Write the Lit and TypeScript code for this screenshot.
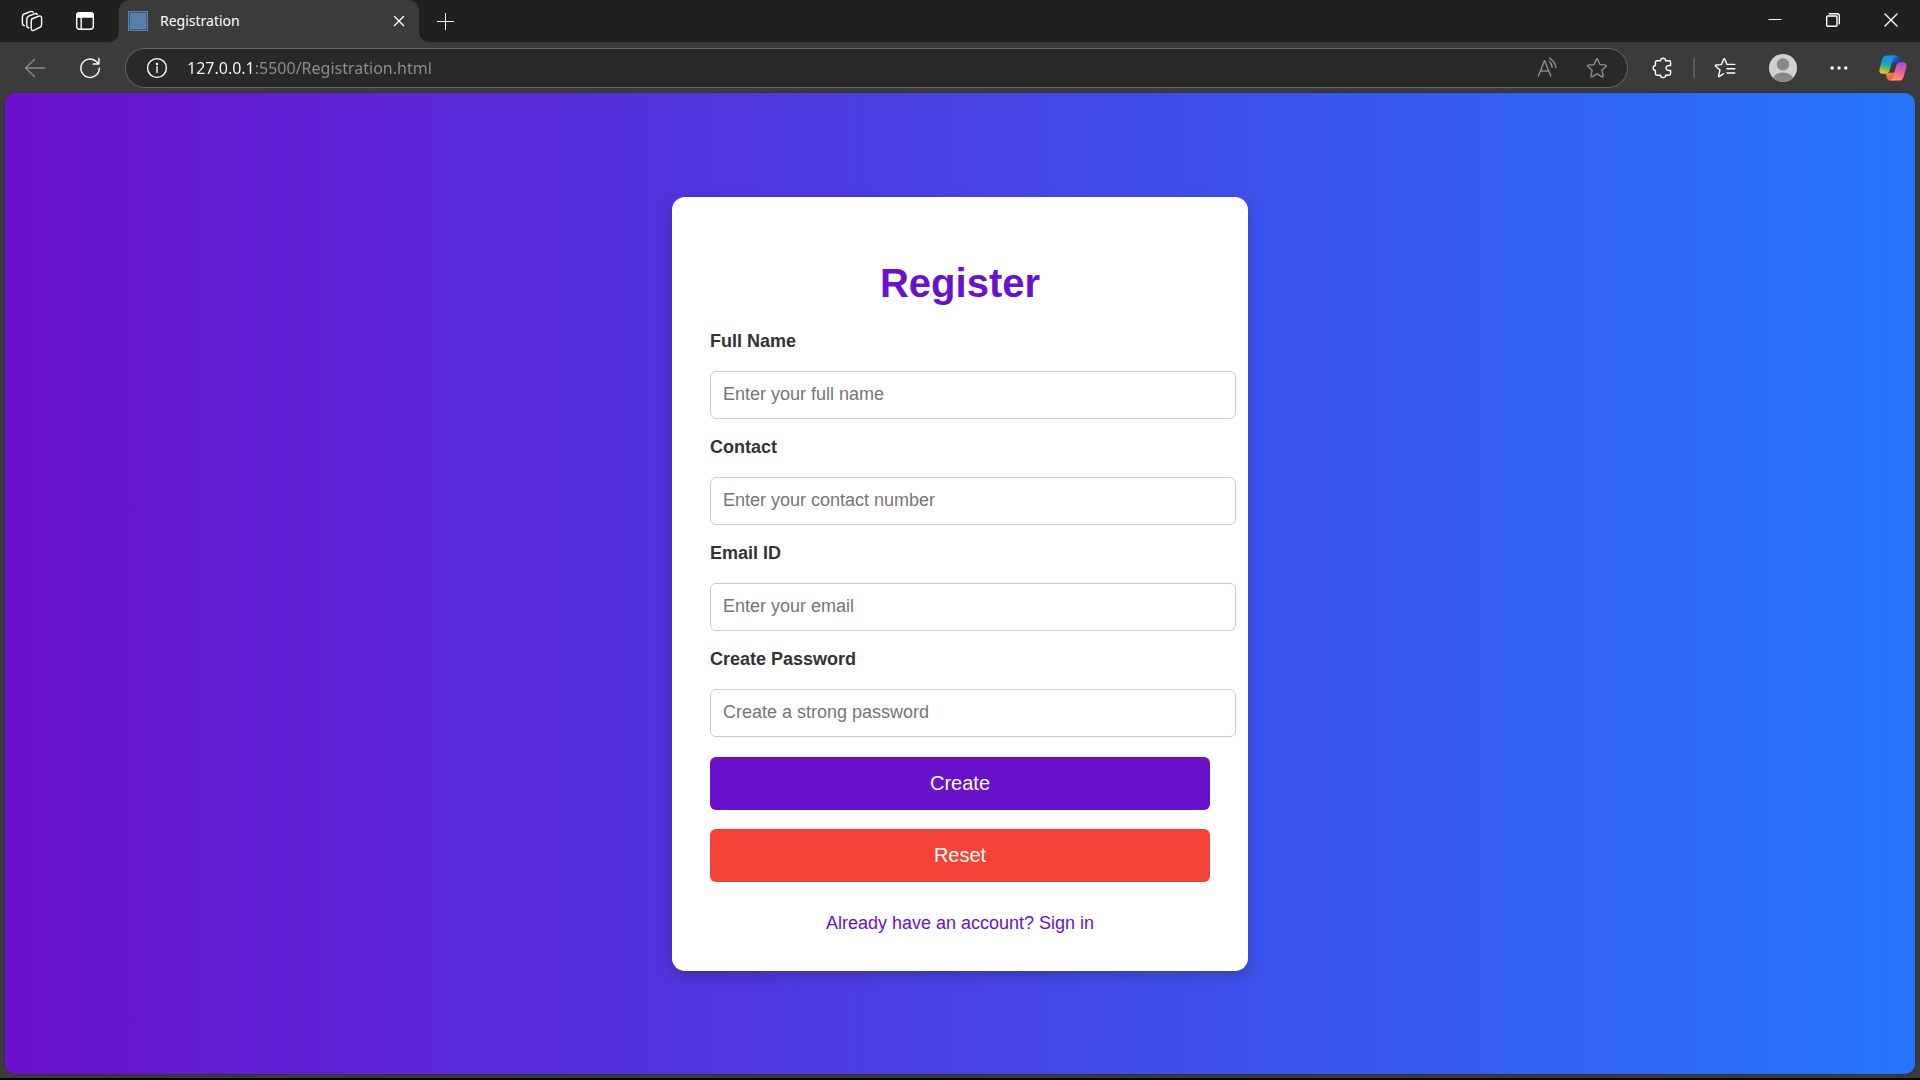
import { LitElement, html, css, svg } from "lit";
import { customElement } from "lit/decorators.js";

interface Field {
  id: string;
  label: string;
  type: string;
  placeholder: string;
}

const FIELDS: Field[] = [
  { id: "full-name", label: "Full Name", type: "text", placeholder: "Enter your full name" },
  { id: "contact", label: "Contact", type: "tel", placeholder: "Enter your contact number" },
  { id: "email", label: "Email ID", type: "email", placeholder: "Enter your email" },
  { id: "password", label: "Create Password", type: "password", placeholder: "Create a strong password" },
];

const icon = (size: number, body: unknown) =>
  html`<svg class="icon" width=${size} height=${size} viewBox="0 0 ${size} ${size}" aria-hidden="true">${body}</svg>`;

const workspaces = svg`
  <path d="M10.6 9 L17.8 6.2 Q20.6 5.4 20.6 8.2 V14.4 Q20.6 16.4 18.8 17.4 L13.2 20.2 Q10.3 21.2 10.2 18.6 V11.4 Q10.2 9.6 11.4 8.8"/>
  <path d="M7.8 17.8 Q5.8 17.6 5.8 15.4 V9.2 Q5.8 7.2 7.6 6.2 L13.4 3.8 Q15.6 3 16.4 4.4"/>
  <path d="M3.4 15.6 Q1.4 15.4 1.4 12.8 V6.8 Q1.4 4.8 3.2 4 L9.2 1.6 Q11.4 1 12.2 2.2"/>`;

const tabActions = svg`
  <rect x="2.7" y="2.7" width="16.6" height="16.6" rx="3"/>
  <path class="solid" d="M2.7 7 V5.5 a2.8 2.8 0 0 1 2.8-2.8 h11 a2.8 2.8 0 0 1 2.8 2.8 V7 Z"/>
  <path d="M7.2 7.5 V19"/>`;

const back = svg`<path d="M20.5 11 H1.5 M10.5 2.5 L1.5 11 L10.5 19.5"/>`;
const reload = svg`<path d="M20.3 11.2 A9.2 9.2 0 1 1 17.6 4.7 L19.8 7 M19.9 1.4 V7 H14.2"/>`;
const info = svg`
  <circle cx="11" cy="11" r="9.4"/>
  <path d="M11 9.8 V15.6"/><circle class="solid" cx="11" cy="7" r="0.6"/>`;
const readAloud = svg`
  <path d="M1.4 19 L7.6 3.6 L13.8 19 M3.6 14 H11.6"/>
  <path d="M12.4 4.2 Q14.8 6.8 15.2 10.4 M12.6 1.2 Q18 4.4 19 10.6"/>`;
const star = svg`<path d="M11 1.8 Q11.4 1.8 11.7 2.5 L13.9 7.5 L19.6 8.1 Q21 8.4 20.1 9.4 L15.9 13.3 L17.1 18.8 Q17.2 20.2 16 19.8 L11 16.9 L6 19.8 Q4.8 20.2 4.9 18.8 L6.1 13.3 L1.9 9.4 Q1 8.4 2.4 8.1 L8.1 7.5 L10.3 2.5 Q10.6 1.8 11 1.8 Z"/>`;
const puzzle = svg`<path d="M5 3.8 H8.6 Q8.4 1.3 11.1 1.3 Q13.8 1.3 13.6 3.8 H17 Q18.6 3.8 18.6 5.4 V8.6 Q14.2 8 14 11 Q14.2 14 18.6 13.4 V16.6 Q18.6 18.2 17 18.2 H13.6 Q13.8 20.6 11.1 20.6 Q8.4 20.6 8.6 18.2 H5 Q3.4 18.2 3.4 16.6 V13.4 Q1.2 13.4 1.2 11 Q1.2 8.6 3.4 8.6 V5.4 Q3.4 3.8 5 3.8 Z"/>`;
const favorites = svg`
  <path d="M9.4 16.7 L5.6 19.4 Q4.4 20 4.6 18.6 L6 13 L1.6 9.2 Q0.8 8.2 2.2 8 L7.4 7.6 L9.6 2.4 Q10.3 1.2 10.9 2.4 L13 7.4 H20.8"/>
  <path d="M13 11.7 H20.8 M13 16 H20.8"/>`;
const dots = svg`
  <circle class="solid" cx="4.2" cy="11" r="1"/>
  <circle class="solid" cx="11" cy="11" r="1"/>
  <circle class="solid" cx="17.8" cy="11" r="1"/>`;

const avatar = svg`
  <defs><clipPath id="avatar-clip"><circle cx="14" cy="14" r="14"/></clipPath></defs>
  <g class="flat" clip-path="url(#avatar-clip)">
    <rect width="28" height="28" fill="#d2d0ce"/>
    <circle cx="14" cy="10.4" r="6.2" fill="#8a8886"/>
    <ellipse cx="14" cy="26.4" rx="10.6" ry="8" fill="#8a8886"/>
  </g>`;

const copilot = svg`
  <defs>
    <linearGradient id="cp-left" x1="0.6" y1="0" x2="0.35" y2="1">
      <stop offset="0" stop-color="#1a8fe6"/><stop offset="0.4" stop-color="#169fce"/>
      <stop offset="0.7" stop-color="#5fba62"/><stop offset="1" stop-color="#f4cd10"/>
    </linearGradient>
    <linearGradient id="cp-right" x1="0.7" y1="0" x2="0.4" y2="1">
      <stop offset="0" stop-color="#a04fe8"/><stop offset="0.5" stop-color="#ee5a9c"/>
      <stop offset="1" stop-color="#ff9a5e"/>
    </linearGradient>
    <linearGradient id="cp-top" x1="0" y1="0" x2="1" y2="0.6">
      <stop offset="0" stop-color="#1c7de6"/><stop offset="1" stop-color="#173fc0"/>
    </linearGradient>
    <linearGradient id="cp-bottom" x1="0" y1="0" x2="1" y2="1">
      <stop offset="0" stop-color="#f7902a"/><stop offset="1" stop-color="#ec4a50"/>
    </linearGradient>
  </defs>
  <g class="flat">
    <path fill="url(#cp-top)" d="M12 2.4 H17.6 Q20.4 2.4 21.2 5.2 L22.4 9.2 L19 9.8 H13 Z"/>
    <path fill="url(#cp-bottom)" d="M7.6 20.4 L11 19.8 H17 L17 27.6 H12.4 Q9.6 27.6 8.8 24.8 Z"/>
    <path fill="url(#cp-left)" d="M9 2.4 H17.6 Q15.8 3.2 15 6 L11.6 17.6 Q10.8 20.6 7.6 20.8 H4.8 Q0.4 20.6 1.6 16 L4.2 6.6 Q5.4 2.4 9 2.4 Z"/>
    <path fill="url(#cp-right)" d="M21 27.6 H12.4 Q14.2 26.8 15 24 L18.4 12.4 Q19.2 9.4 22.4 9.2 H25.2 Q29.6 9.4 28.4 14 L25.8 23.4 Q24.6 27.6 21 27.6 Z"/>
  </g>`;

const minimize = svg`<path class="crisp" d="M0.5 6.5 H13.5"/>`;
const restore = svg`
  <rect x="0.7" y="3" width="10.3" height="10.3" rx="1"/>
  <path d="M3.2 0.7 H11 Q13.3 0.7 13.3 3 V10.8"/>`;
const cross = svg`<path d="M1 1 L13 13 M13 1 L1 13"/>`;
const smallCross = svg`<path d="M1.5 1.5 L10.5 10.5 M10.5 1.5 L1.5 10.5"/>`;
const plus = svg`<path class="crisp" d="M9.5 1 V18 M1 9.5 H18"/>`;

@customElement("browser-chrome")
export class BrowserChrome extends LitElement {
  static styles = css`
    :host {
      display: block;
      color: #ffffff;
      font-family: "Noto Sans", "Open Sans", sans-serif;
    }
    .strip {
      display: flex;
      height: 42px;
    }
    .strip-start,
    .strip-end {
      display: flex;
      align-items: center;
      background: #202020;
    }
    .strip-start {
      gap: 13px;
      padding: 0 14px 0 12px;
      border-bottom-right-radius: 10px;
    }
    .strip-end {
      flex: 1;
      justify-content: space-between;
      border-bottom-left-radius: 10px;
    }
    .tab-slot {
      display: flex;
      width: 300px;
      background: linear-gradient(#202020 50%, #3b3b3b 50%);
    }
    .tab {
      display: flex;
      flex: 1;
      align-items: center;
      gap: 12px;
      padding: 0 10px 0 9px;
      border-radius: 10px 10px 0 0;
      background: #3b3b3b;
    }
    .favicon {
      box-sizing: border-box;
      width: 20px;
      height: 20px;
      border: 1px solid #5b84b4;
      background: #597ea9;
      box-shadow: inset 0 0 0 1px #3f5673, inset 0 0 0 2px #5b84b4;
    }
    .title {
      flex: 1;
      font-size: 14px;
      line-height: 20px;
    }
    .window {
      display: flex;
      height: 100%;
    }
    button {
      display: flex;
      align-items: center;
      justify-content: center;
      width: 40px;
      height: 40px;
      padding: 0;
      border: 0;
      background: none;
      color: inherit;
      font: inherit;
    }
    .close-tab {
      width: 20px;
      height: 20px;
    }
    .new-tab {
      width: 53px;
    }
    .window button {
      width: 58px;
    }
    .copilot {
      width: 36px;
    }
    .dim {
      color: #8c8c8c;
    }
    .toolbar {
      display: flex;
      align-items: center;
      gap: 15px;
      padding: 6px 9px 5px 15px;
    }
    .address {
      box-sizing: border-box;
      display: flex;
      flex: 1;
      align-items: center;
      height: 40px;
      padding: 0 6px 0 11px;
      border: 1px solid #666666;
      border-radius: 20px;
      background: #292929;
    }
    .address button {
      height: 38px;
    }
    .address .dim {
      width: 49px;
    }
    .url {
      flex: 1;
      min-width: 0;
      padding: 0 0 0 10px;
      border: 0;
      outline: 0;
      background: linear-gradient(to right, #ffffff 77px, #8f8f8f 77px);
      background-clip: text;
      -webkit-background-clip: text;
      color: transparent;
      font: 16px/24px "Noto Sans", "Open Sans", sans-serif;
    }
    .tools,
    .account {
      display: flex;
      align-items: center;
    }
    .tools {
      padding-right: 3px;
    }
    .account {
      gap: 16px;
    }
    .divider {
      width: 2px;
      height: 20px;
      margin: 0 10px;
      background: #5c5c5c;
    }
    .icon {
      display: block;
      fill: none;
      stroke: currentColor;
      stroke-width: 1.4;
      stroke-linecap: round;
      stroke-linejoin: round;
    }
    .solid {
      fill: currentColor;
    }
    .crisp {
      stroke-width: 1;
      stroke-linecap: butt;
    }
    .flat {
      stroke: none;
    }
  `;

  render() {
    return html`
      <div class="strip">
        <div class="strip-start">
          <button aria-label="Workspaces">${icon(22, workspaces)}</button>
          <button aria-label="Tab actions">${icon(22, tabActions)}</button>
        </div>
        <div class="tab-slot">
          <div class="tab">
            <span class="favicon"></span>
            <span class="title">Registration</span>
            <button class="close-tab" aria-label="Close tab">${icon(12, smallCross)}</button>
          </div>
        </div>
        <div class="strip-end">
          <button class="new-tab" aria-label="New tab">${icon(19, plus)}</button>
          <div class="window">
            <button aria-label="Minimize">${icon(14, minimize)}</button>
            <button aria-label="Restore">${icon(14, restore)}</button>
            <button aria-label="Close">${icon(14, cross)}</button>
          </div>
        </div>
      </div>
      <div class="toolbar">
        <button class="dim" aria-label="Back">${icon(22, back)}</button>
        <button aria-label="Refresh">${icon(22, reload)}</button>
        <div class="address">
          <button aria-label="Site information">${icon(22, info)}</button>
          <input class="url" type="text" aria-label="Address" spellcheck="false" value="127.0.0.1:5500/Registration.html" />
          <button class="dim" aria-label="Read aloud">${icon(22, readAloud)}</button>
          <button class="dim" aria-label="Add to favorites">${icon(22, star)}</button>
        </div>
        <div class="tools">
          <button aria-label="Extensions">${icon(22, puzzle)}</button>
          <span class="divider"></span>
          <button aria-label="Favorites">${icon(22, favorites)}</button>
        </div>
        <div class="account">
          <button aria-label="Profile">${icon(28, avatar)}</button>
          <button aria-label="Settings and more">${icon(22, dots)}</button>
          <button class="copilot" aria-label="Copilot">${icon(30, copilot)}</button>
        </div>
      </div>
    `;
  }
}

@customElement("register-card")
export class RegisterCard extends LitElement {
  static styles = css`
    :host {
      display: block;
      width: 500px;
      padding: 38px;
      border-radius: 13px;
      background: #ffffff;
      box-shadow: 0 5px 13px rgba(0, 0, 0, 0.2);
      font: 18px/20px "Liberation Sans", Arial, sans-serif;
    }
    h1 {
      margin: 25px 0;
      color: #6a11cb;
      font-size: 40px;
      line-height: 46px;
      text-align: center;
    }
    form {
      display: flex;
      flex-direction: column;
      gap: 18px;
    }
    .field {
      display: flex;
      flex-direction: column;
      gap: 20px;
    }
    label {
      color: #333333;
      font-weight: bold;
    }
    input {
      width: 100%;
      height: 46px;
      padding: 0 12px;
      border: 1px solid #cccccc;
      border-radius: 6px;
      background: #ffffff;
      font: inherit;
    }
    input::placeholder {
      color: #757575;
    }
    .actions {
      display: grid;
      gap: 19px;
      padding-top: 2px;
    }
    button {
      height: 53px;
      border: 0;
      border-radius: 6px;
      color: #ffffff;
      font: 20px/24px "Liberation Sans", Arial, sans-serif;
    }
    .create {
      background: #6a11cb;
    }
    .reset {
      background: #f44336;
    }
    .sign-in {
      margin: 31px 0 0;
      text-align: center;
    }
    a {
      color: #6a11cb;
      text-decoration: none;
    }
  `;

  render() {
    return html`
      <h1>Register</h1>
      <form>
        ${FIELDS.map(
          (f) => html`
            <div class="field">
              <label for=${f.id}>${f.label}</label>
              <input id=${f.id} type=${f.type} placeholder=${f.placeholder} />
            </div>
          `,
        )}
        <div class="actions">
          <button class="create" type="submit">Create</button>
          <button class="reset" type="reset">Reset</button>
        </div>
      </form>
      <p class="sign-in"><a href="#signin">Already have an account? Sign in</a></p>
    `;
  }
}

@customElement("app-root")
export class AppRoot extends LitElement {
  static styles = css`
    :host {
      box-sizing: border-box;
      display: flex;
      flex-direction: column;
      min-height: 100vh;
      border-bottom: 2px solid #000000;
      background: #3b3b3b;
    }
    .page {
      display: flex;
      flex: 1;
      align-items: center;
      justify-content: center;
      margin: 0 5px 4px;
      border-radius: 10px;
      background: linear-gradient(to right, #6a11cb, #2575fc);
      box-shadow: 0 0 2px rgba(0, 0, 0, 0.4);
    }
  `;

  render() {
    return html`
      <browser-chrome></browser-chrome>
      <main class="page"><register-card></register-card></main>
    `;
  }
}
